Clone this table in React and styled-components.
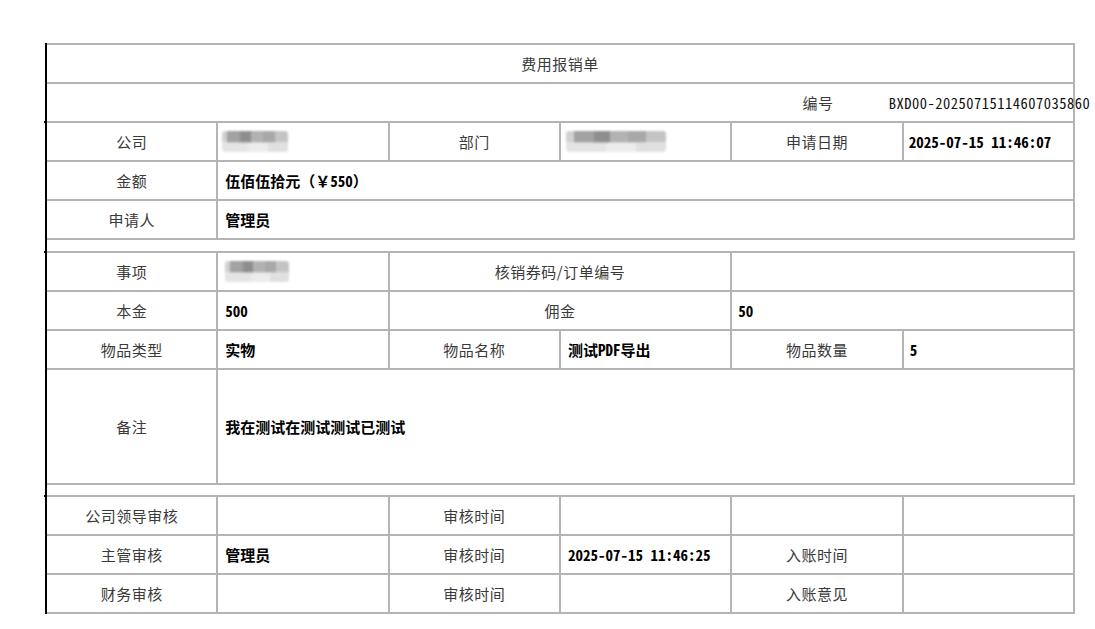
import React from 'react';
import styled, { createGlobalStyle } from 'styled-components';

const LINE = '#b4b4b4';

const Global = createGlobalStyle`
  html, body { margin: 0; padding: 0; background: #fff; }
  body { font-family: "Noto Sans CJK SC", sans-serif; }
  * { box-sizing: border-box; }
`;

const Page = styled.div`
  padding: 43px 0 15px 45px;
`;

const Sheet = styled.div`
  width: 1030px;
  border-left: 2px solid #000;
  display: flex;
  flex-direction: column;
`;

const Section = styled.div`
  display: grid;
  grid-template-columns: repeat(6, minmax(0, 1fr));
  border-top: 2px solid ${LINE};
`;

const Spacer = styled.div`
  height: ${(p) => p.$h}px;
`;

const Cell = styled.div`
  position: relative;
  min-width: 0;
  grid-column: span ${(p) => p.$span || 1};
  height: ${(p) => p.$h || 39}px;
  border-bottom: 2px solid ${LINE};
  border-right: ${(p) => (p.$open ? '0' : `2px solid ${LINE}`)};
  display: flex;
  align-items: center;
  justify-content: ${(p) => (p.$value ? 'flex-start' : 'center')};
  padding-left: ${(p) => (p.$value ? `${p.$pad ?? 7}px` : '0')};
  white-space: nowrap;
  font-size: 15px;
  ${(p) =>
    p.$value
      ? `font-family: "Noto Sans Mono CJK SC", "Noto Sans CJK SC", sans-serif;
         font-weight: 700; color: #000;`
      : `font-weight: 400; color: #3a3a3a; letter-spacing: 0.5px;`}
  ${(p) =>
    p.$tick &&
    `&::before { content: ''; position: absolute; left: -3px; top: -2px;
      width: 2px; height: 2px; background: #000; }`}
`;

const LastCell = styled(Cell)`
  border-right: 2px solid ${LINE};
`;

const NumberCell = styled(Cell)`
  justify-content: flex-start;
  padding-left: 0;
`;

const Number = styled.span`
  margin-left: -15px;
  font-family: "Noto Sans Mono CJK SC", "Noto Sans CJK SC", sans-serif;
  font-size: 14.5px;
  font-weight: 400;
  color: #111;
`;

const Redact = styled.div`
  width: ${(p) => p.$w}px;
  height: 21px;
  margin-left: ${(p) => p.$ml || 0}px;
  border-radius: 3px;
  filter: blur(1.3px);
  background:
    linear-gradient(90deg, #d0d0d0 0 8%, #a2a2a2 8% 28%, #8e8e8e 28% 44%, #b2b2b2 44% 62%, #a8a8a8 62% 80%, #c4c4c4 80% 100%) top / 100% 55% no-repeat,
    linear-gradient(90deg, #e4e4e4 0 40%, #ececec 40% 70%, #e0e0e0 70% 100%) bottom / 100% 45% no-repeat;
`;

export default function App() {
  return (
    <>
      <Global />
      <Page>
        <Sheet>
          <Section>
            <Cell $span={6}>费用报销单</Cell>
            <Cell $span={4} $open />
            <Cell $open>编号</Cell>
            <NumberCell>
              <Number>BXD00-20250715114607035860</Number>
            </NumberCell>
            <Cell $tick>公司</Cell>
            <Cell $value>
              <Redact $w={66} $ml={-3} />
            </Cell>
            <Cell>部门</Cell>
            <Cell $value>
              <Redact $w={100} $ml={-2} />
            </Cell>
            <Cell>申请日期</Cell>
            <Cell $value $pad={5}>2025-07-15 11:46:07</Cell>
            <Cell>金额</Cell>
            <Cell $span={5} $value>伍佰伍拾元（￥550）</Cell>
            <Cell>申请人</Cell>
            <Cell $span={5} $value>管理员</Cell>
          </Section>

          <Spacer $h={11} />

          <Section>
            <Cell $tick>事项</Cell>
            <Cell $value>
              <Redact $w={64} />
            </Cell>
            <Cell $span={2}>核销券码/订单编号</Cell>
            <Cell $span={2} $value />
            <Cell>本金</Cell>
            <Cell $value>500</Cell>
            <Cell $span={2}>佣金</Cell>
            <Cell $span={2} $value $pad={6}>50</Cell>
            <Cell>物品类型</Cell>
            <Cell $value>实物</Cell>
            <Cell>物品名称</Cell>
            <Cell $value>测试PDF导出</Cell>
            <Cell>物品数量</Cell>
            <Cell $value $pad={6}>5</Cell>
            <Cell $h={115}>备注</Cell>
            <LastCell $span={5} $h={115} $value>我在测试在测试测试已测试</LastCell>
          </Section>

          <Spacer $h={10} />

          <Section>
            <Cell $tick>公司领导审核</Cell>
            <Cell $value />
            <Cell>审核时间</Cell>
            <Cell $value />
            <Cell />
            <Cell $value />
            <Cell>主管审核</Cell>
            <Cell $value>管理员</Cell>
            <Cell>审核时间</Cell>
            <Cell $value>2025-07-15 11:46:25</Cell>
            <Cell>入账时间</Cell>
            <Cell $value />
            <Cell>财务审核</Cell>
            <Cell $value />
            <Cell>审核时间</Cell>
            <Cell $value />
            <Cell>入账意见</Cell>
            <Cell $value />
          </Section>
        </Sheet>
      </Page>
    </>
  );
}
